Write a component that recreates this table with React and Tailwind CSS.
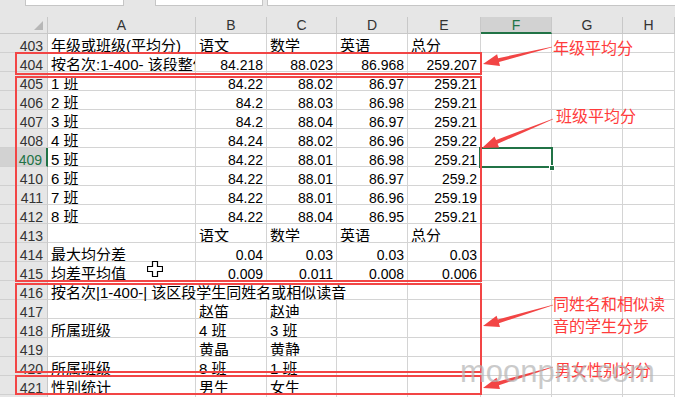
// App.jsx — spreadsheet screenshot with red annotation boxes
const COLS = [
  { key: 'A', w: 'w-[148px] shrink-0' },
  { key: 'B', w: 'w-[71px] shrink-0' },
  { key: 'C', w: 'w-[70px] shrink-0' },
  { key: 'D', w: 'w-[71px] shrink-0' },
  { key: 'E', w: 'w-[73px] shrink-0' },
  { key: 'F', w: 'w-[71px] shrink-0' },
  { key: 'G', w: 'w-[71px] shrink-0' },
  { key: 'H', w: 'flex-1 min-w-0' },
];

const ROWS = [
  { n: 403, cells: ['年级或班级(平均分)', '语文', '数学', '英语', '总分'] },
  { n: 404, cells: ['按名次:1-400- 该段整体均分', '84.218', '88.023', '86.968', '259.207'] },
  { n: 405, cells: ['1 班', '84.22', '88.02', '86.97', '259.21'] },
  { n: 406, cells: ['2 班', '84.2', '88.03', '86.98', '259.21'] },
  { n: 407, cells: ['3 班', '84.2', '88.04', '86.97', '259.21'] },
  { n: 408, cells: ['4 班', '84.24', '88.02', '86.96', '259.22'] },
  { n: 409, cells: ['5 班', '84.22', '88.01', '86.98', '259.21'] },
  { n: 410, cells: ['6 班', '84.22', '88.01', '86.97', '259.2'] },
  { n: 411, cells: ['7 班', '84.22', '88.01', '86.96', '259.19'] },
  { n: 412, cells: ['8 班', '84.22', '88.04', '86.95', '259.21'] },
  { n: 413, cells: ['', '语文', '数学', '英语', '总分'] },
  { n: 414, cells: ['最大均分差', '0.04', '0.03', '0.03', '0.03'] },
  { n: 415, cells: ['均差平均值', '0.009', '0.011', '0.008', '0.006'] },
  { n: 416, span: '按名次|1-400-| 该区段学生同姓名或相似读音' },
  { n: 417, cells: ['', '赵笛', '赵迪'] },
  { n: 418, cells: ['所属班级', '4 班', '3 班'] },
  { n: 419, cells: ['', '黄晶', '黄静'] },
  { n: 420, cells: ['所属班级', '8 班', '1 班'] },
  { n: 421, cells: ['性别统计', '男生', '女生'] },
  { n: 422, cells: ['按名次:1-400- 男女生均分', '语文', '数学', '英语', '总分'] },
];

const SELECTED_ROW = 409;

const Cell = ({ w, value = '' }) => {
  const isNum = /^[\d.]+$/.test(value);
  return (
    <div
      className={`${w} h-full border-r border-b border-[#d4d4d4] overflow-hidden whitespace-nowrap px-[3px] pt-[5px] leading-[14px] ${
        isNum ? 'text-right text-[14px]' : 'text-left text-[15px]'
      }`}
    >
      {value}
    </div>
  );
};

const RowHeader = ({ n }) => {
  const selected = n === SELECTED_ROW;
  return (
    <div
      className={`w-[48px] shrink-0 h-full border-b border-[#d0d0d0] text-right pr-[4px] pt-[5px] leading-[14px] ${
        selected
          ? 'bg-[#d2d2d2] text-[#217346] border-r-2 border-r-[#217346]'
          : 'bg-[#e6e6e6] text-[#333] border-r border-r-[#c8c8c8]'
      }`}
    >
      {n}
    </div>
  );
};

// tapered arrow: thin tail, thicker shaft near the head
const arrowPoints = (x1, y1, x2, y2) => {
  const len = Math.hypot(x2 - x1, y2 - y1);
  const dx = (x2 - x1) / len;
  const dy = (y2 - y1) / len;
  const nx = -dy;
  const ny = dx;
  const headLen = 16;
  const bx = x2 - dx * headLen;
  const by = y2 - dy * headLen;
  const p = (x, y, k) => `${(x + nx * k).toFixed(1)},${(y + ny * k).toFixed(1)}`;
  return [
    p(x1, y1, 0.3),
    p(bx, by, 2),
    p(bx, by, 6),
    `${x2},${y2}`,
    p(bx, by, -6),
    p(bx, by, -2),
    p(x1, y1, -0.3),
  ].join(' ');
};

const ARROWS = [
  [552, 47, 483, 64],
  [553, 119, 482, 148],
  [553, 305, 483, 326],
  [553, 367, 483, 388],
];

export default function App() {
  return (
    <div className="relative w-[675px] h-[397px] overflow-hidden bg-white text-[14px] text-black font-['Liberation_Sans','Noto_Sans_CJK_SC',sans-serif]">
      {/* formula bar strip */}
      <div className="h-[17px] flex items-start bg-[#e6e6e6]">
        <div className="ml-[25px] w-[99px] h-[6px] bg-white border-x border-b border-[#c6c6c6]" />
        <div className="ml-[31px] w-[108px] h-[6px] bg-white border-x border-b border-[#c6c6c6]" />
        <div className="ml-[4px] flex-1 h-[6px] bg-white border-l border-b border-[#c6c6c6]" />
      </div>

      {/* column headers */}
      <div className="h-[17px] flex bg-[#e6e6e6] text-[#333]">
        <div className="w-[48px] shrink-0 h-full border-r border-b border-[#c8c8c8] flex items-end justify-end pr-[4px] pb-[3px]">
          <svg width="9" height="9" viewBox="0 0 9 9">
            <polygon points="9,0 9,9 0,9" fill="#b7b7b7" />
          </svg>
        </div>
        {COLS.map((c) =>
          c.key === 'F' ? (
            <div
              key={c.key}
              className={`${c.w} h-full bg-[#d2d2d2] text-[#217346] border-r border-[#c8c8c8] border-b-2 border-b-[#217346] text-center leading-[16px]`}
            >
              {c.key}
            </div>
          ) : (
            <div
              key={c.key}
              className={`${c.w} h-full border-r border-b border-[#c8c8c8] text-center leading-[16px]`}
            >
              {c.key}
            </div>
          )
        )}
      </div>

      {/* grid rows */}
      {ROWS.map((row) => (
        <div key={row.n} className="h-[19px] flex">
          <RowHeader n={row.n} />
          {row.span ? (
            <>
              <div className="w-[360px] shrink-0 h-full border-r border-b border-[#d4d4d4] whitespace-nowrap px-[3px] pt-[5px] leading-[14px] text-[15px]">
                {row.span}
              </div>
              {COLS.slice(4).map((c) => (
                <Cell key={c.key} w={c.w} />
              ))}
            </>
          ) : (
            COLS.map((c, i) => <Cell key={c.key} w={c.w} value={row.cells[i]} />)
          )}
        </div>
      ))}

      {/* selected cell F409 */}
      <div className="absolute left-[479px] top-[147px] w-[74px] h-[21px] border-2 border-[#217346]" />
      <div className="absolute left-[549px] top-[165px] w-[6px] h-[6px] bg-[#217346] border border-white" />

      {/* red annotation boxes */}
      <div className="absolute left-[15px] top-[52px] w-[467px] h-[23px] border-2 border-[#f24545]" />
      <div className="absolute left-[15px] top-[76px] w-[467px] h-[206px] border-2 border-[#f24545]" />
      <div className="absolute left-[15px] top-[283px] w-[467px] h-[90px] border-2 border-[#f24545]" />
      <div className="absolute left-[15px] top-[375px] w-[467px] h-[20px] border-2 border-[#f24545]" />

      {/* arrows */}
      <svg className="absolute inset-0 pointer-events-none" width="675" height="397">
        {ARROWS.map((a, i) => (
          <polygon key={i} points={arrowPoints(...a)} fill="#f24545" />
        ))}
      </svg>

      {/* annotation labels */}
      <div className="absolute left-[553px] top-[36px] text-[16px] leading-[22px] text-[#ff3b3b] font-['Noto_Sans_CJK_SC',sans-serif]">
        年级平均分
      </div>
      <div className="absolute left-[556px] top-[104px] text-[16px] leading-[22px] text-[#ff3b3b] font-['Noto_Sans_CJK_SC',sans-serif]">
        班级平均分
      </div>
      <div className="absolute left-[553px] top-[292px] text-[16px] leading-[22px] text-[#ff3b3b] font-['Noto_Sans_CJK_SC',sans-serif]">
        <div>同姓名和相似读</div>
        <div>音的学生分步</div>
      </div>
      <div className="absolute left-[555px] top-[358px] text-[16px] leading-[22px] text-[#ff3b3b] font-['Noto_Sans_CJK_SC',sans-serif]">
        男女性别均分
      </div>

      {/* mouse cursor */}
      <svg className="absolute left-[147px] top-[261px]" width="16" height="16" viewBox="0 0 16 16">
        <polygon
          points="5.5,0.5 10.5,0.5 10.5,5.5 15.5,5.5 15.5,10.5 10.5,10.5 10.5,15.5 5.5,15.5 5.5,10.5 0.5,10.5 0.5,5.5 5.5,5.5"
          fill="#fff"
          stroke="#000"
          strokeWidth="1.2"
        />
      </svg>

      {/* watermark */}
      <div className="absolute left-[460px] top-[356px] text-[31px] leading-none text-[#b5b5b5] opacity-70 font-['Liberation_Sans',sans-serif] pointer-events-none">
        moonpnx.com
      </div>
    </div>
  );
}
